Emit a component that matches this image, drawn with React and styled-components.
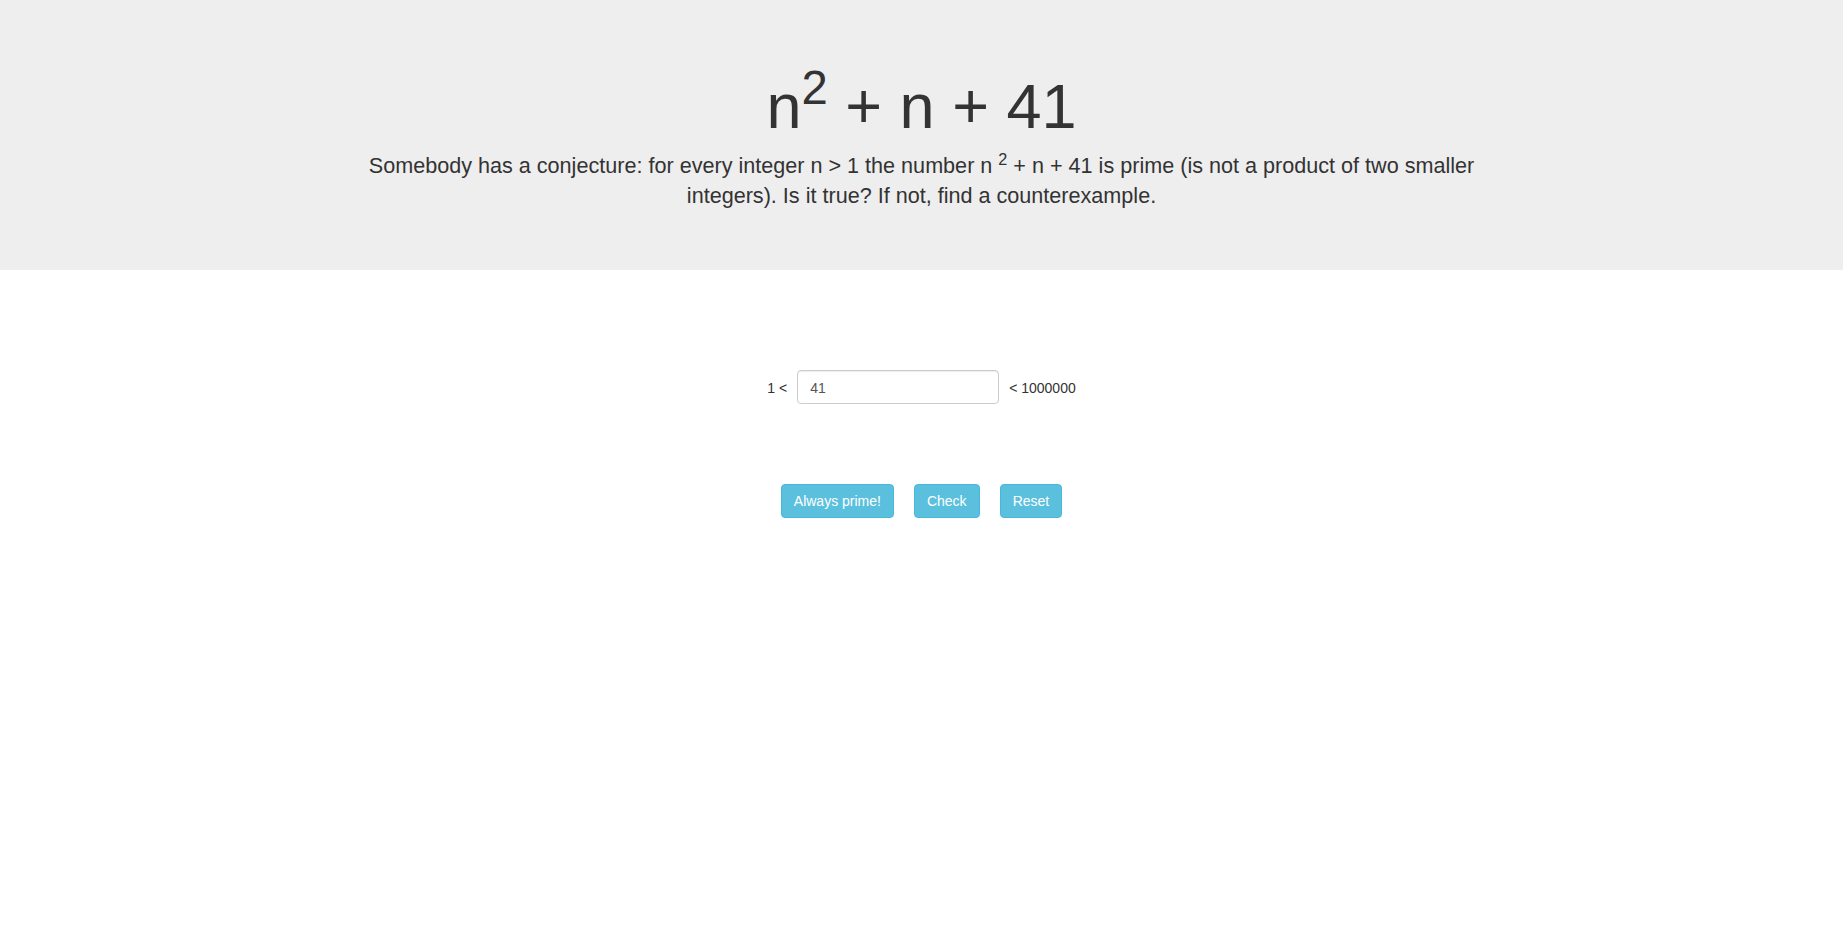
import React, { useState } from 'react';
import styled, { createGlobalStyle } from 'styled-components';

const GlobalStyle = createGlobalStyle`
  html, body {
    margin: 0;
    padding: 0;
    background: #fff;
  }
  body {
    font-family: "Liberation Sans", Arial, Helvetica, sans-serif;
    font-size: 14px;
    line-height: 1.42857143;
    color: #333;
  }
  * {
    box-sizing: border-box;
  }
`;

const Jumbotron = styled.header`
  background: #eee;
  padding: 52px 0 44px;
  text-align: center;
`;

const Container = styled.div`
  width: 1170px;
  margin: 0 auto;
  padding: 0 15px;
`;

const Title = styled.h1`
  font-size: 63px;
  font-weight: 500;
  line-height: 1.1;
  margin: 20px 0 10px;
  color: inherit;
`;

const Sup = styled.sup`
  font-size: 75%;
  line-height: 0;
  position: relative;
  vertical-align: baseline;
  top: -0.5em;
`;

const Lead = styled.p`
  font-size: 21.6px;
  line-height: 30px;
  font-weight: 200;
  margin: 0 0 15px;
`;

const Main = styled.main`
  display: flex;
  flex-direction: column;
  align-items: center;
`;

const RangeRow = styled.div`
  display: flex;
  align-items: baseline;
  gap: 10px;
  margin-top: 100px;
`;

const Bound = styled.span`
  font-size: 14px;
  color: #333;
`;

const NumberInput = styled.input`
  width: 202px;
  height: 34px;
  padding: 7px 12px 5px;
  font-family: inherit;
  font-size: 14px;
  line-height: 1.42857143;
  color: #555;
  background: #fff;
  border: 1px solid #ccc;
  border-radius: 4px;
  box-shadow: inset 0 1px 1px rgba(0, 0, 0, 0.075);
  outline: none;
`;

const ButtonRow = styled.div`
  display: flex;
  gap: 20px;
  margin-top: 80px;
`;

const InfoButton = styled.button`
  height: 34px;
  padding: 6px 12px;
  font-family: inherit;
  font-size: 14px;
  line-height: 1.42857143;
  color: #fff;
  background: #5bc0de;
  border: 1px solid #46b8da;
  border-radius: 4px;
  cursor: pointer;
`;

export default function App() {
  const [n, setN] = useState('41');

  return (
    <>
      <GlobalStyle />
      <Jumbotron>
        <Container>
          <Title>
            n<Sup>2</Sup> + n + 41
          </Title>
          <Lead>
            Somebody has a conjecture: for every integer n &gt; 1 the number n <Sup>2</Sup> + n + 41
            is prime (is not a product of two smaller integers). Is it true? If not, find a
            counterexample.
          </Lead>
        </Container>
      </Jumbotron>
      <Main>
        <RangeRow>
          <Bound>1 &lt;</Bound>
          <NumberInput value={n} onChange={(e) => setN(e.target.value)} />
          <Bound>&lt; 1000000</Bound>
        </RangeRow>
        <ButtonRow>
          <InfoButton>Always prime!</InfoButton>
          <InfoButton>Check</InfoButton>
          <InfoButton onClick={() => setN('41')}>Reset</InfoButton>
        </ButtonRow>
      </Main>
    </>
  );
}
